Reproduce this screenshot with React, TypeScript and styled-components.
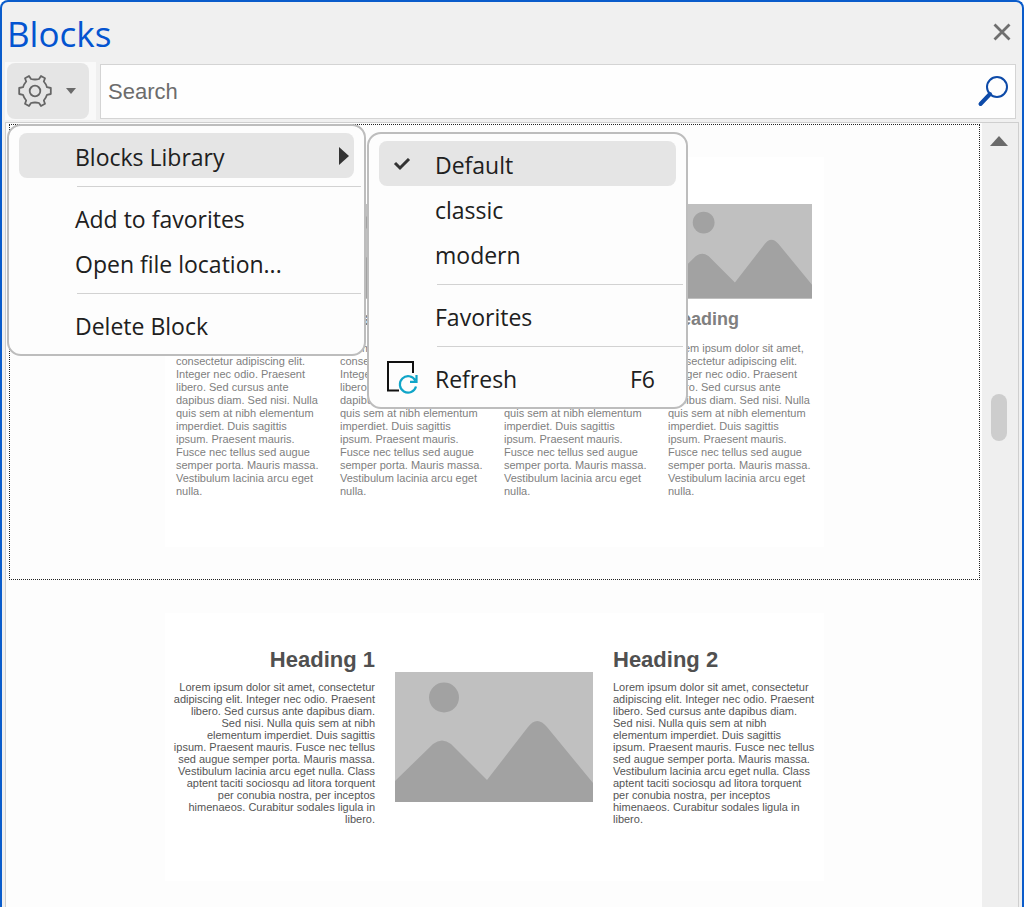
import React from "react";
import styled, { createGlobalStyle, css } from "styled-components";

const GlobalStyle = createGlobalStyle`
  *, *::before, *::after { box-sizing: border-box; }
  html, body { margin: 0; height: 100%; background: #ffffff; }
  body { overflow: hidden; font-family: "Open Sans", "Noto Sans", sans-serif; }
  button, input { font: inherit; color: inherit; }
  h1, h2, p, ul { margin: 0; padding: 0; }
`;

const Pane = styled.main`
  display: flex;
  flex-direction: column;
  height: 100vh;
  border: 2px solid #0a5ccb;
  border-bottom: 0;
  border-radius: 8px 8px 0 0;
  background: #f0f0f0;
  overflow: hidden;
`;

const TitleBar = styled.header`
  display: flex;
  align-items: center;
  justify-content: space-between;
  flex: none;
  height: 60px;
  padding: 0 8px 0 5px;
`;

const Title = styled.h1`
  padding-top: 4px;
  font-size: 35px;
  line-height: 48px;
  font-weight: 400;
  color: #0454d0;
`;

const PlainButton = styled.button`
  display: flex;
  align-items: center;
  justify-content: center;
  padding: 0;
  border: 0;
  background: transparent;
`;

const CloseButton = styled(PlainButton)`
  width: 24px;
  height: 24px;
`;

const Toolbar = styled.div`
  display: flex;
  flex: none;
  gap: 4px;
  height: 58px;
  padding: 0 6px 0 3px;
`;

const SettingsSlot = styled.div`
  position: relative;
  width: 91px;
  padding: 1px 7px 1px 2px;
  background: #f9f9f9;
`;

const SettingsButton = styled(PlainButton)`
  gap: 14px;
  width: 100%;
  height: 56px;
  padding-right: 2px;
  border-radius: 8px;
  background: #e5e5e5;
`;

const SearchBox = styled.label`
  display: flex;
  align-items: center;
  flex: 1;
  height: 55px;
  margin-top: 2px;
  padding: 0 6px 0 7px;
  border: 1px solid #d4d4d4;
  background: #fefefe;
`;

const SearchInput = styled.input`
  flex: 1;
  min-width: 0;
  padding: 0;
  border: 0;
  outline: 0;
  background: transparent;
  font-family: "Liberation Sans", Arial, sans-serif;
  font-size: 22px;
  color: #333333;
  &::placeholder { color: #6c6c6c; opacity: 1; }
`;

const ListFrame = styled.div`
  display: flex;
  flex: 1;
  min-height: 0;
  margin: 2px 3px 0;
  border: 1px solid #cfcfcf;
  border-bottom: 0;
  background: #fdfdfd;
`;

const BlockList = styled.div`
  flex: 1;
  min-width: 0;
  padding: 1px 2px 0 3px;
  overflow: hidden;
`;

const Block = styled.article<{ $selected?: boolean }>`
  padding: 32px 16px;
  border: 1px dotted ${(p) => (p.$selected ? "#222222" : "transparent")};
  font-family: "Liberation Sans", Arial, sans-serif;
`;

const Sheet = styled.div`
  display: grid;
  column-gap: 20px;
  max-width: 659px;
  margin: 0 auto;
  background: #ffffff;
`;

const CardSheet = styled(Sheet)`
  grid-template-columns: repeat(4, 1fr);
  min-height: 390px;
  padding: 47px 12px 0 11px;
`;

const ArticleSheet = styled(Sheet)`
  grid-template-columns: 1fr 198px 1fr;
  min-height: 268px;
  padding: 33px 8px 0 7px;
`;

const Column = styled.section<{ $right?: boolean; $offset?: boolean }>`
  text-align: ${(p) => (p.$right ? "right" : "left")};
  ${(p) => p.$offset && css`padding-top: 26px;`}
`;

const Picture = styled.svg`
  display: block;
  width: 100%;
  height: auto;
`;

const CardHeading = styled.h2`
  margin: 8px 0 11px;
  font-size: 18px;
  line-height: 24px;
  color: #808080;
`;

const CardText = styled.p`
  font-size: 11px;
  line-height: 13px;
  color: #808080;
`;

const TextHeading = styled.h2`
  margin-bottom: 7px;
  font-size: 22px;
  line-height: 28px;
  color: #505050;
`;

const ColumnText = styled.p`
  font-size: 11px;
  line-height: 12px;
  color: #555555;
`;

const ScrollBar = styled.div`
  display: flex;
  flex-direction: column;
  align-items: center;
  flex: none;
  width: 36px;
  padding: 8px 2px 0 0;
  background: #efefef;
`;

const ScrollButton = styled(PlainButton)`
  width: 24px;
  height: 20px;
`;

const ScrollThumb = styled.div`
  width: 16px;
  height: 47px;
  margin-top: 243px;
  border-radius: 8px;
  background: #cdcdcd;
`;

const Menu = styled.ul<{ $sub?: boolean }>`
  position: absolute;
  z-index: ${(p) => (p.$sub ? 2 : 1)};
  top: ${(p) => (p.$sub ? "-1px" : "62px")};
  left: ${(p) => (p.$sub ? "358px" : "2px")};
  width: ${(p) => (p.$sub ? 321 : 359)}px;
  padding: 7px 0;
  border: 2px solid #bdbdbd;
  border-radius: 14px;
  background: #fdfdfd;
  list-style: none;
  color: #202020;
`;

const MenuRow = styled.li`
  position: relative;
  padding: 0 10px;
`;

const MenuButton = styled.button<{ $active?: boolean }>`
  display: grid;
  grid-template-columns: 56px 1fr auto;
  align-items: center;
  width: 100%;
  height: 45px;
  padding: 3px 21px 0 0;
  border: 0;
  border-radius: 8px;
  background: ${(p) => (p.$active ? "#e5e5e5" : "transparent")};
  font-size: 23px;
  line-height: 32px;
  text-align: left;
`;

const SubmenuButton = styled(MenuButton)`
  padding-right: 5px;
`;

const IconCell = styled.span`
  display: flex;
  justify-content: center;
  padding-right: 10px;
`;

const Separator = styled.li`
  height: 1px;
  margin: 8px 3px 8px 68px;
  background: #d2d2d2;
`;

const GearIcon = () => (
  <svg width="34" height="34" viewBox="-17 -17 34 34" fill="none" stroke="#666666" strokeWidth="1.8" strokeLinejoin="round" aria-hidden="true">
    <circle r="5.3" />
    <path d="M-10 -12.8 L-6 -15 L-4 -12 Q0 -11 4 -12 L6 -15 L10 -12.8 L8.8 -9.5 Q11 -7 12 -3.8 L15.8 -3 V3 L12 3.8 Q11 7 8.8 9.5 L10 12.8 L6 15 L4 12 Q0 11 -4 12 L-6 15 L-10 12.8 L-8.8 9.5 Q-11 7 -12 3.8 L-15.8 3 V-3 L-12 -3.8 Q-11 -7 -8.8 -9.5 Z" />
  </svg>
);

const Triangle = ({ width, height, points, color }: { width: number; height: number; points: string; color: string }) => (
  <svg width={width} height={height} aria-hidden="true">
    <polygon points={points} fill={color} />
  </svg>
);

const CheckIcon = () => (
  <svg width="18" height="14" viewBox="0 0 18 14" fill="none" stroke="#333333" strokeWidth="3" aria-hidden="true">
    <path d="M2 5 L7 10 L16 1" />
  </svg>
);

const RefreshIcon = () => (
  <svg width="32" height="37" viewBox="0 0 32 37" fill="none" aria-hidden="true">
    <path d="M27 12 V1 H2 V29.5 H13" stroke="#111111" strokeWidth="2" />
    <path d="M29.3 19.5 A8.2 8.2 0 1 0 30 25.5 M30.5 14 V20.8 H24" stroke="#10a5c8" strokeWidth="2.2" />
  </svg>
);

const SearchIcon = () => (
  <svg width="32" height="32" viewBox="0 0 32 32" fill="none" stroke="#0d4aa8" aria-hidden="true">
    <circle cx="20" cy="11" r="10" strokeWidth="2" />
    <path d="M13 18 L3.5 28" strokeWidth="4" strokeLinecap="round" />
  </svg>
);

const Placeholder = () => (
  <Picture viewBox="0 0 198 130" role="img" aria-label="Picture placeholder">
    <rect width="198" height="130" fill="#c0c0c0" />
    <circle cx="49" cy="25.5" r="15" fill="#a2a2a2" />
    <path d="M0 109 L38 72 Q47 65 56 72 L92 108 L133 55 Q142 43 152 55 L198 111 V130 H0 Z" fill="#a2a2a2" />
  </Picture>
);

const CARD_TEXT =
  "Lorem ipsum dolor sit amet, consectetur adipiscing elit. Integer nec odio. Praesent libero. Sed cursus ante dapibus diam. Sed nisi. Nulla quis sem at nibh elementum imperdiet. Duis sagittis ipsum. Praesent mauris. Fusce nec tellus sed augue semper porta. Mauris massa. Vestibulum lacinia arcu eget nulla.";

const LONG_TEXT =
  CARD_TEXT + " Class aptent taciti sociosqu ad litora torquent per conubia nostra, per inceptos himenaeos. Curabitur sodales ligula in libero.";

const LibraryMenu = () => (
  <Menu $sub aria-label="Blocks Library">
    <MenuRow>
      <MenuButton $active>
        <IconCell><CheckIcon /></IconCell>
        <span>Default</span>
      </MenuButton>
    </MenuRow>
    <MenuRow><MenuButton><span /><span>classic</span></MenuButton></MenuRow>
    <MenuRow><MenuButton><span /><span>modern</span></MenuButton></MenuRow>
    <Separator role="separator" />
    <MenuRow><MenuButton><span /><span>Favorites</span></MenuButton></MenuRow>
    <Separator role="separator" />
    <MenuRow>
      <MenuButton>
        <IconCell><RefreshIcon /></IconCell>
        <span>Refresh</span>
        <span>F6</span>
      </MenuButton>
    </MenuRow>
  </Menu>
);

const SettingsMenu = () => (
  <Menu aria-label="Settings">
    <MenuRow>
      <SubmenuButton $active aria-haspopup="true" aria-expanded="true">
        <span />
        <span>Blocks Library</span>
        <Triangle width={10} height={21} points="0,0 10,9 0,18" color="#333333" />
      </SubmenuButton>
      <LibraryMenu />
    </MenuRow>
    <Separator role="separator" />
    <MenuRow><MenuButton><span /><span>Add to favorites</span></MenuButton></MenuRow>
    <MenuRow><MenuButton><span /><span>Open file location...</span></MenuButton></MenuRow>
    <Separator role="separator" />
    <MenuRow><MenuButton><span /><span>Delete Block</span></MenuButton></MenuRow>
  </Menu>
);

export default function App() {
  return (
    <>
      <GlobalStyle />
      <Pane>
        <TitleBar>
          <Title>Blocks</Title>
          <CloseButton aria-label="Close">
            <svg width="18" height="18" viewBox="0 0 18 18" stroke="#6f6f6f" strokeWidth="2.8" aria-hidden="true">
              <path d="M1.5 1.5 L16.5 16.5 M16.5 1.5 L1.5 16.5" />
            </svg>
          </CloseButton>
        </TitleBar>
        <Toolbar>
          <SettingsSlot>
            <SettingsButton aria-label="Settings" aria-haspopup="true" aria-expanded="true">
              <GearIcon />
              <Triangle width={10} height={6} points="0,0 10,0 5,6" color="#6a6a6a" />
            </SettingsButton>
            <SettingsMenu />
          </SettingsSlot>
          <SearchBox>
            <SearchInput type="text" placeholder="Search" aria-label="Search" />
            <PlainButton aria-label="Run search"><SearchIcon /></PlainButton>
          </SearchBox>
        </Toolbar>
        <ListFrame>
          <BlockList>
            <Block $selected>
              <CardSheet>
                {[1, 2, 3, 4].map((n) => (
                  <Column key={n}>
                    <Placeholder />
                    <CardHeading>Heading</CardHeading>
                    <CardText>{CARD_TEXT}</CardText>
                  </Column>
                ))}
              </CardSheet>
            </Block>
            <Block>
              <ArticleSheet>
                <Column $right>
                  <TextHeading>Heading 1</TextHeading>
                  <ColumnText>{LONG_TEXT}</ColumnText>
                </Column>
                <Column $offset><Placeholder /></Column>
                <Column>
                  <TextHeading>Heading 2</TextHeading>
                  <ColumnText>{LONG_TEXT}</ColumnText>
                </Column>
              </ArticleSheet>
            </Block>
          </BlockList>
          <ScrollBar>
            <ScrollButton aria-label="Scroll up">
              <Triangle width={18} height={10} points="9,0 18,10 0,10" color="#6a6a6a" />
            </ScrollButton>
            <ScrollThumb />
          </ScrollBar>
        </ListFrame>
      </Pane>
    </>
  );
}
